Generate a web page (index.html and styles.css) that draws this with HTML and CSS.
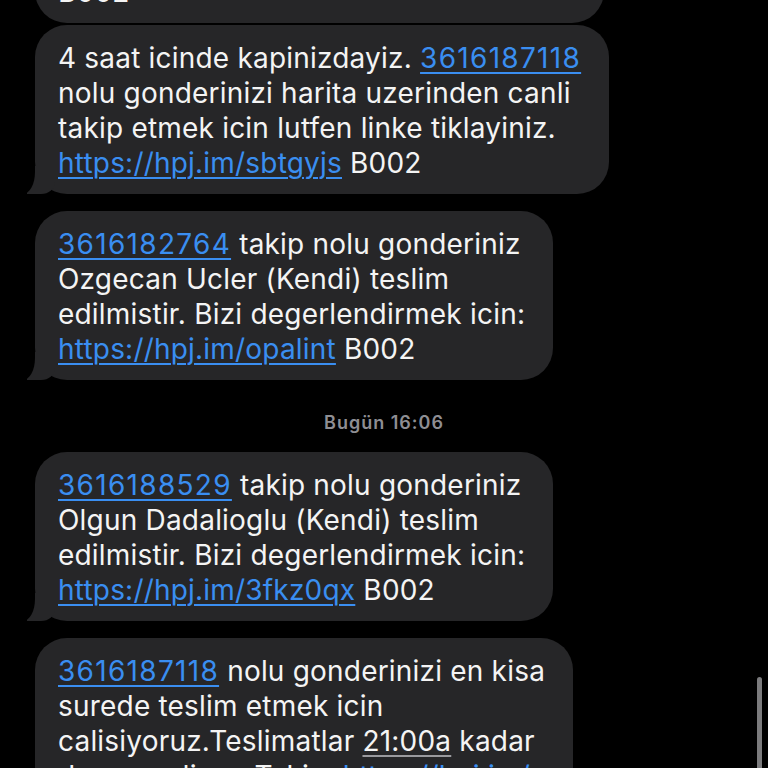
FILE: index.html
```html
<!DOCTYPE html>
<html lang="tr">
<head>
<meta charset="utf-8">
<title>Mesajlar</title>
<link rel="stylesheet" href="styles.css">
</head>
<body>
<main class="thread">
  <section class="group">
    <p class="bubble">Siparisiniz yola cikmistir. Takip icin link<br>B002</p>
    <p class="bubble tail">4 saat icinde kapinizdayiz. <a class="link num" href="#">3616187118</a><br>nolu gonderinizi harita uzerinden canli<br>takip etmek icin lutfen linke tiklayiniz.<br><a class="link" href="#">https://hpj.im/sbtgyjs</a> B002</p>
  </section>
  <section class="group">
    <p class="bubble tail"><a class="link num" href="#">3616182764</a> takip nolu gonderiniz<br>Ozgecan Ucler (Kendi) teslim<br>edilmistir. Bizi degerlendirmek icin:<br><a class="link" href="#">https://hpj.im/opalint</a> B002</p>
  </section>
  <div class="stamp">Bugün 16:06</div>
  <section class="group">
    <p class="bubble tail"><a class="link num" href="#">3616188529</a> takip nolu gonderiniz<br>Olgun Dadalioglu (Kendi) teslim<br>edilmistir. Bizi degerlendirmek icin:<br><a class="link" href="#">https://hpj.im/3fkz0qx</a> B002</p>
  </section>
  <section class="group">
    <p class="bubble"><a class="link num" href="#">3616187118</a> nolu gonderinizi en kisa<br>surede teslim etmek icin<br>calisiyoruz.Teslimatlar <span class="date">21:00a</span> kadar<br>devam ediyor. Takip: <a class="link" href="#">https://hpj.im/</a></p>
  </section>
</main>
<div class="scrollbar"></div>
</body>
</html>
```

FILE: styles.css
```css
html, body {
  margin: 0;
  padding: 0;
  background: #000;
  height: 768px;
  overflow: hidden;
}

body {
  position: relative;
  font-family: "Inter", "Liberation Sans", sans-serif;
  color: #f4f4f4;
}

.thread {
  display: flex;
  flex-direction: column;
  align-items: flex-start;
  padding-left: 35px;
  margin-top: -76px;
}

.group {
  display: flex;
  flex-direction: column;
  align-items: flex-start;
  gap: 2px;
  margin-bottom: 17px;
}

.bubble {
  position: relative;
  z-index: 0;
  margin: 0;
  padding: 16px 28px 13px 23px;
  background: #262628;
  border-radius: 32px;
  font-size: 28px;
  line-height: 35px;
  letter-spacing: 0.2px;
  white-space: nowrap;
}

.tail::before {
  content: "";
  position: absolute;
  z-index: -1;
  left: -8px;
  bottom: 0;
  width: 28px;
  height: 28px;
  background: #262628;
  border-bottom-right-radius: 14px 12px;
}

.tail::after {
  content: "";
  position: absolute;
  z-index: -1;
  left: -20px;
  bottom: 0;
  width: 20px;
  height: 30px;
  background: #000;
  border-bottom-right-radius: 12px 22px;
}

.link {
  color: #3a8ef1;
  text-decoration: underline;
  text-decoration-thickness: 2px;
  text-underline-offset: 4px;
}

.num {
  letter-spacing: 1.3px;
}

.date {
  text-decoration: underline;
  text-decoration-color: #9a9a9e;
  text-decoration-thickness: 2px;
  text-underline-offset: 4px;
}

.stamp {
  align-self: center;
  margin: 16px 0 19px -35px;
  font-size: 18px;
  line-height: 20px;
  font-weight: 600;
  letter-spacing: 1px;
  color: #8e8e93;
}

.scrollbar {
  position: absolute;
  right: 6px;
  top: 677px;
  width: 5px;
  height: 100px;
  border-radius: 3px;
  background: #7b7b7d;
}
```
